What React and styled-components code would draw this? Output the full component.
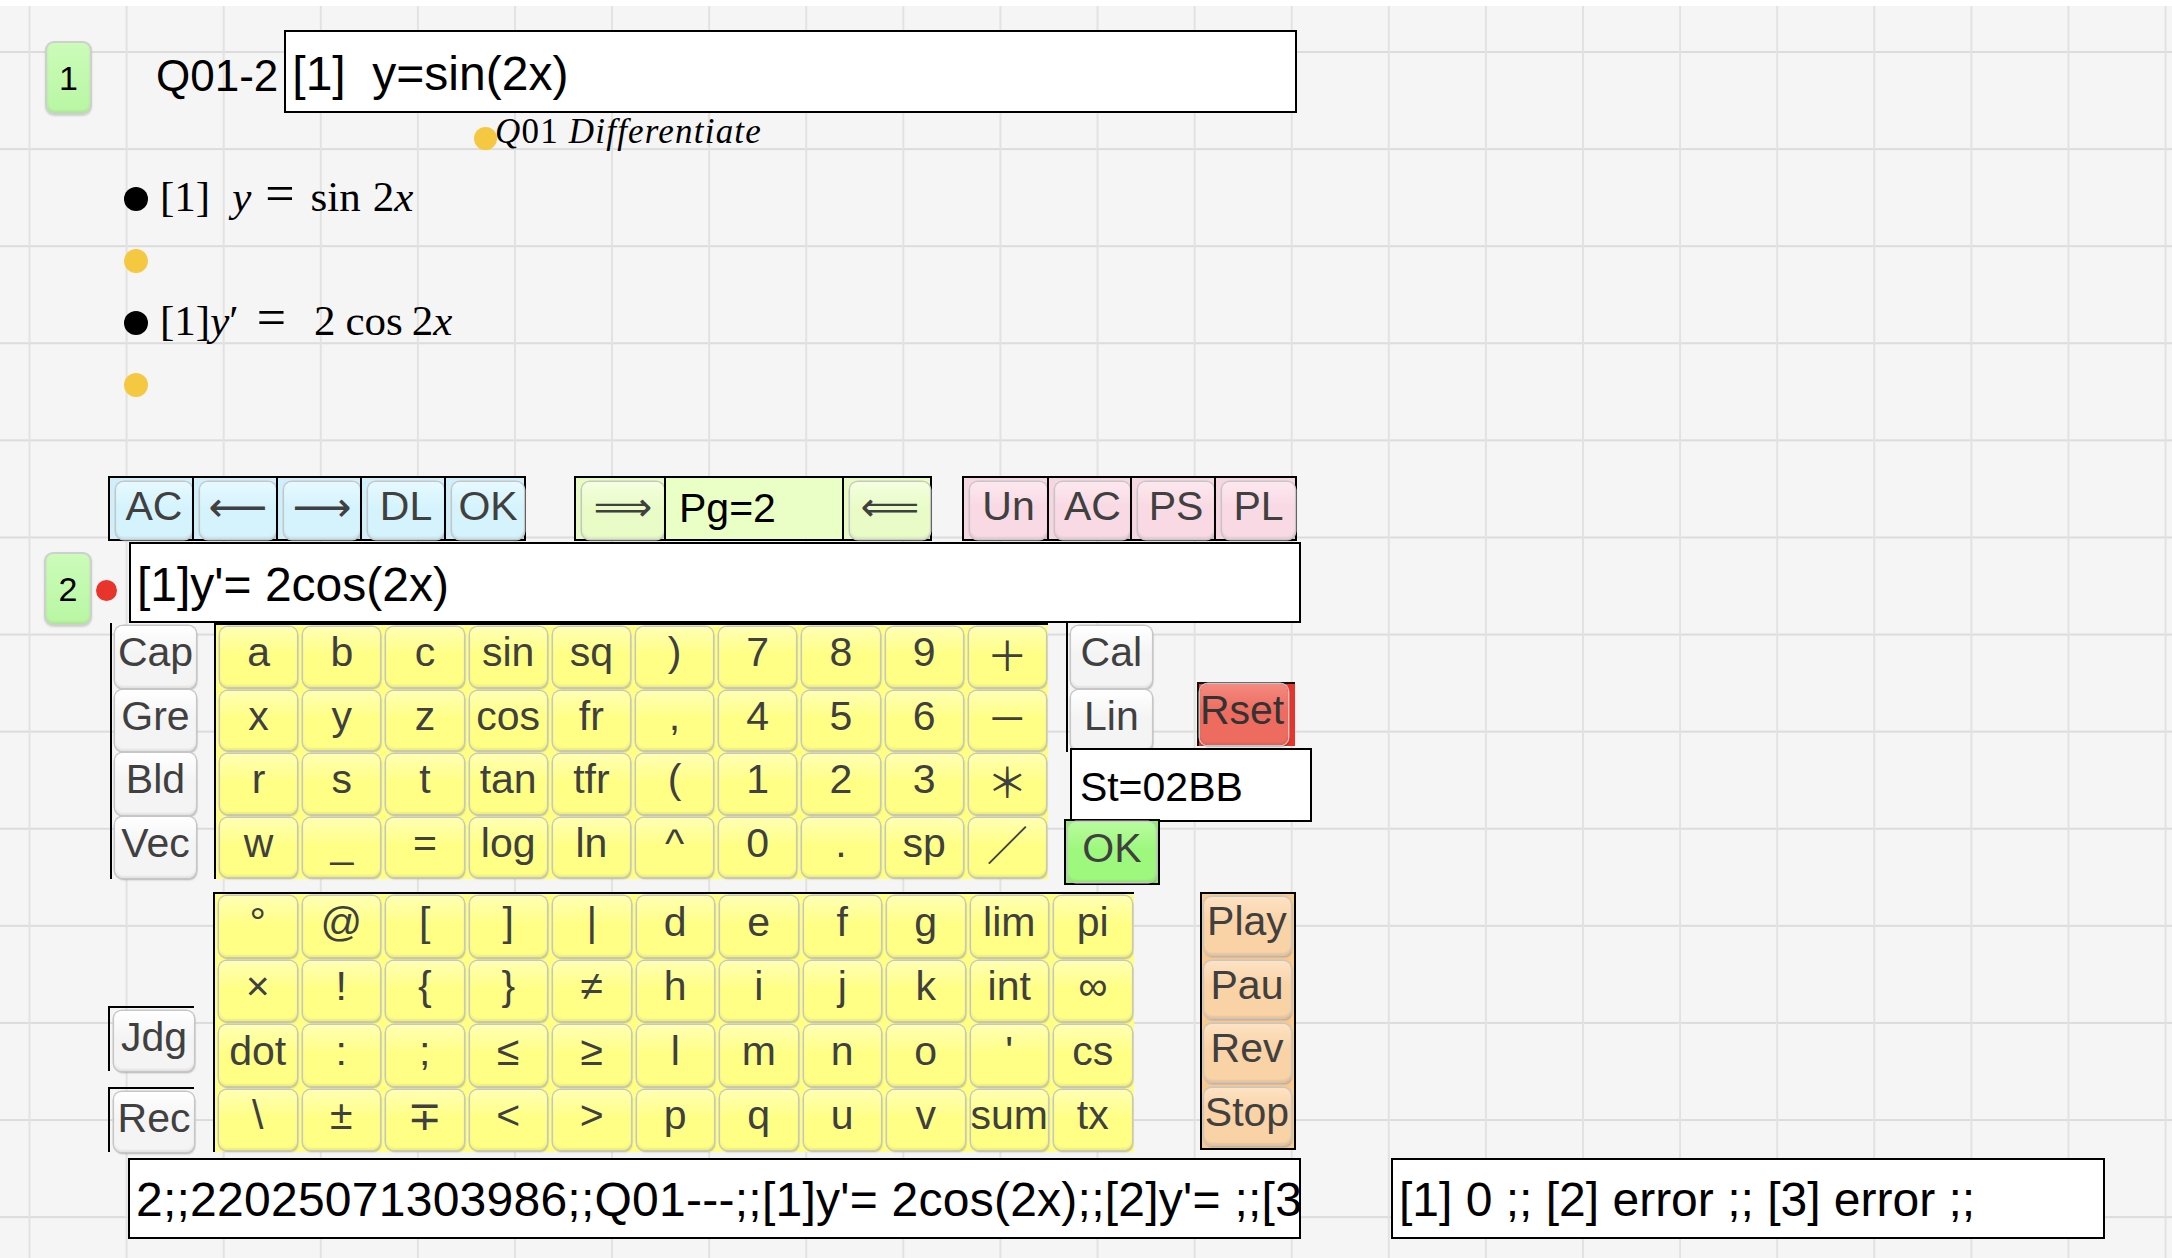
import styled, { createGlobalStyle } from "styled-components";

const GlobalStyle = createGlobalStyle`
  html, body {
    margin: 0;
    padding: 0;
    background: #ffffff;
  }
  body {
    font-family: "Liberation Sans", "DejaVu Sans", Arial, sans-serif;
  }
`;

const UPPER_KEYS = [
  ["a", "b", "c", "sin", "sq", ")", "7", "8", "9", "＋"],
  ["x", "y", "z", "cos", "fr", ",", "4", "5", "6", "－"],
  ["r", "s", "t", "tan", "tfr", "(", "1", "2", "3", "＊"],
  ["w", "_", "=", "log", "ln", "^", "0", ".", "sp", "／"],
];

const LOWER_KEYS = [
  ["°", "@", "[", "]", "|", "d", "e", "f", "g", "lim", "pi"],
  ["×", "!", "{", "}", "≠", "h", "i", "j", "k", "int", "∞"],
  ["dot", ":", ";", "≤", "≥", "l", "m", "n", "o", "'", "cs"],
  ["\\", "±", "∓", "<", ">", "p", "q", "u", "v", "sum", "tx"],
];

const Page = styled.div`
  margin-top: 6px;
  min-height: 1252px;
  padding-top: 24px;
  box-sizing: border-box;
  background-color: #f5f5f5;
  background-image: linear-gradient(to right, #e2e2e2 0, #e2e2e2 2px, transparent 2px),
    linear-gradient(to bottom, #dcdcdc 0, #dcdcdc 2px, transparent 2px);
  background-size: 97.1px 97.1px;
  background-position: 28.5px 45px;
  display: flex;
  flex-direction: column;
  align-items: flex-start;
`;

/* ---------- question header ---------- */

const HeaderRow = styled.div`
  display: flex;
  align-items: flex-start;
  height: 83px;
  padding-left: 45px;
`;

const Badge = styled.div`
  width: ${(p) => p.$w}px;
  height: 74px;
  margin-top: ${(p) => p.$top}px;
  box-sizing: border-box;
  border: 2px solid #cfcfcf;
  border-radius: 9px;
  background: linear-gradient(to bottom, #cbfcb9, #b9f6a3);
  box-shadow: inset 0 -2px 3px rgba(0, 0, 0, 0.08), 0 1px 2px rgba(0, 0, 0, 0.15);
  display: flex;
  align-items: center;
  justify-content: center;
  font-size: 34px;
  color: #000;
`;

const QLabel = styled.div`
  margin-left: 64px;
  margin-top: 8px;
  font-size: 44px;
  line-height: 75px;
  color: #000;
`;

const TextBox = styled.div`
  width: ${(p) => p.$w}px;
  height: ${(p) => p.$h}px;
  margin-left: ${(p) => p.$ml || 0}px;
  margin-top: ${(p) => p.$mt || 0}px;
  box-sizing: border-box;
  border: 2px solid #000;
  background: #fff;
  padding: ${(p) => p.$pt}px 0 0 ${(p) => p.$pl || 6}px;
  font-size: ${(p) => p.$size || 48}px;
  line-height: ${(p) => p.$lh}px;
  letter-spacing: ${(p) => p.$ls || 0}px;
  color: #000;
  white-space: pre;
  overflow: hidden;
`;

const NoteRow = styled.div`
  display: flex;
  align-items: flex-start;
  height: 48px;
  padding-left: 474px;
`;

const Dot = styled.div`
  flex: 0 0 auto;
  width: ${(p) => p.$size}px;
  height: ${(p) => p.$size}px;
  margin-top: ${(p) => p.$top || 0}px;
  margin-left: ${(p) => p.$ml || 0}px;
  border-radius: 50%;
  background: ${(p) => p.$color};
`;

const NoteText = styled.div`
  margin-top: 1px;
  margin-left: -2px;
  font-family: "Liberation Serif", "DejaVu Serif", serif;
  font-style: italic;
  font-size: 35px;
  line-height: 35px;
  letter-spacing: 1.2px;
  color: #000;
`;

const Upright = styled.span`
  font-style: normal;
`;

/* ---------- rendered maths ---------- */

const MathList = styled.div`
  margin-top: 7px;
  padding-left: 124px;
  display: flex;
  flex-direction: column;
`;

const MathRow = styled.div`
  height: 62px;
  display: flex;
  align-items: center;
`;

const MathLine = styled.div`
  margin-left: 12px;
  padding-bottom: 6px;
  font-family: "Liberation Serif", "DejaVu Serif", serif;
  font-size: 43px;
  line-height: 43px;
  color: #000;
  white-space: pre;
`;

const Var = styled.i`
  font-style: italic;
`;

const Rel = styled.span`
  font-size: 52px;
  line-height: 0;
`;

const Gap = styled.span`
  display: inline-block;
  width: ${(p) => p.$w}px;
`;

/* ---------- toolbars ---------- */

const ToolbarRow = styled.div`
  margin-top: 60px;
  padding-left: 108px;
  display: flex;
  align-items: flex-start;
`;

const Toolbar = styled.div`
  display: flex;
  height: 65px;
  margin-left: ${(p) => p.$ml || 0}px;
  box-sizing: border-box;
  border: 2px solid #000;
  background: ${(p) => p.$bg};
`;

const ToolCell = styled.div`
  flex: 0 0 auto;
  width: ${(p) => p.$w}px;
  box-sizing: border-box;
  border-left: ${(p) => (p.$first ? "none" : "2px solid #000")};
  padding: 4px 0 0 6px;
  background: ${(p) => p.$bg || "transparent"};
  display: flex;
`;

const PageLabel = styled.div`
  padding: 0 0 0 7px;
  font-size: 41px;
  line-height: 52px;
  color: #000;
`;

const Btn = styled.div`
  flex: 1 1 auto;
  width: 100%;
  height: 100%;
  box-sizing: border-box;
  padding-bottom: 8px;
  border-radius: 8px;
  background: linear-gradient(to bottom, ${(p) => p.$light || p.$face} 0%, ${(p) => p.$face} 45%);
  box-shadow: 0 0 0 1.5px #c6c6c6, inset 0 -2px 2px rgba(0, 0, 0, 0.07),
    1px 2px 2px rgba(0, 0, 0, 0.28);
  display: flex;
  align-items: center;
  justify-content: ${(p) => p.$justify || "center"};
  overflow: hidden;
  white-space: nowrap;
  font-family: "Liberation Sans", "DejaVu Sans", "Noto Sans CJK JP", sans-serif;
  font-size: ${(p) => p.$size || 41}px;
  color: ${(p) => p.$ink || "#404040"};
`;

/* ---------- answer input ---------- */

const InputRow = styled.div`
  margin-top: 1px;
  height: 81px;
  padding-left: 44px;
  display: flex;
  align-items: flex-start;
`;

/* ---------- keyboards ---------- */

const KbRow = styled.div`
  height: ${(p) => p.$h}px;
  margin-top: ${(p) => p.$mt || 0}px;
  padding-left: ${(p) => p.$pl}px;
  display: flex;
  align-items: flex-start;
`;

const SideCol = styled.div`
  width: 86px;
  box-sizing: border-box;
  border-left: 2px solid #000;
  padding-top: 2px;
  display: grid;
  grid-auto-rows: 63.5px;
`;

const SideCell = styled.div`
  padding: 1px 0 1px 3px;
  display: flex;
`;

const KeyGrid = styled.div`
  margin-left: ${(p) => p.$ml}px;
  display: grid;
  grid-template-columns: repeat(${(p) => p.$cols}, ${(p) => p.$cw}px);
  grid-auto-rows: ${(p) => p.$rh}px;
  border-top: 2px solid #000;
  border-left: 2px solid #000;
  background: #ffff86;
`;

const KeyCell = styled.div`
  padding: 2px 2px 2px 4px;
  display: flex;
`;

const RightPanel = styled.div`
  margin-left: 18px;
  display: flex;
  flex-direction: column;
  align-items: flex-start;
`;

const PanelTop = styled.div`
  display: flex;
  align-items: flex-start;
`;

const ColorBox = styled.div`
  width: ${(p) => p.$w}px;
  height: ${(p) => p.$h}px;
  margin: ${(p) => p.$m};
  box-sizing: border-box;
  background: ${(p) => p.$bg};
  border: ${(p) => p.$border};
  border-width: ${(p) => p.$bw || "2px"};
  padding: ${(p) => p.$pad};
  display: flex;
`;

const StackCol = styled.div`
  width: 86px;
  height: 100%;
  display: flex;
  flex-direction: column;
  justify-content: flex-end;
  gap: 16px;
`;

const FrameCell = styled.div`
  height: 65px;
  box-sizing: border-box;
  border-left: 2px solid #000;
  border-top: 2px solid #000;
  padding: 3px 0 0 4px;
  display: flex;
`;

const PlayCol = styled.div`
  width: 96px;
  height: 258px;
  margin-left: 66px;
  box-sizing: border-box;
  border: 2px solid #000;
  background: #f7c993;
  display: grid;
  grid-auto-rows: 1fr;
`;

const PlayCell = styled.div`
  padding: 3px 3px 3px 2px;
  display: flex;
`;

const OutputRow = styled.div`
  margin-top: 6px;
  padding-left: 128px;
  display: flex;
`;

const KEY_FACE = { $face: "#ffff86", $light: "#ffffb4" };
const WHITE_FACE = { $face: "#f4f4f4", $light: "#ffffff" };

const KeyBoard = ({ rows, cw, rh, ml }) => (
  <KeyGrid $cols={rows[0].length} $cw={cw} $rh={rh} $ml={ml}>
    {rows.flat().map((k, i) => (
      <KeyCell key={i}>
        <Btn {...KEY_FACE}>{k}</Btn>
      </KeyCell>
    ))}
  </KeyGrid>
);

export default function App() {
  return (
    <>
      <GlobalStyle />
      <Page>
        <HeaderRow>
          <Badge $w={47} $top={11}>1</Badge>
          <QLabel>Q01-2</QLabel>
          <TextBox $w={1013} $h={83} $ml={6} $pt={5} $lh={74}>
            {"[1]  y=sin(2x)"}
          </TextBox>
        </HeaderRow>

        <NoteRow>
          <Dot $size={23} $top={14} $color="#f5c842" />
          <NoteText>
            Q<Upright>01</Upright> Differentiate
          </NoteText>
        </NoteRow>

        <MathList>
          <MathRow>
            <Dot $size={24} $color="#000" />
            <MathLine>
              [1]
              <Gap $w={22} />
              <Var>y</Var>
              <Gap $w={14} />
              <Rel>=</Rel>
              <Gap $w={16} />
              sin
              <Gap $w={12} />2<Var>x</Var>
            </MathLine>
          </MathRow>
          <MathRow>
            <Dot $size={24} $color="#f5c842" />
          </MathRow>
          <MathRow>
            <Dot $size={24} $color="#000" />
            <MathLine>
              [1]
              <Var>y</Var>′<Gap $w={18} />
              <Rel>=</Rel>
              <Gap $w={28} />2<Gap $w={10} />
              cos
              <Gap $w={9} />2<Var>x</Var>
            </MathLine>
          </MathRow>
          <MathRow>
            <Dot $size={24} $color="#f5c842" />
          </MathRow>
        </MathList>

        <ToolbarRow>
          <Toolbar $bg="#d0effa">
            {[
              ["AC", 82],
              ["⟵", 84],
              ["⟶", 84],
              ["DL", 84],
              ["OK", 80],
            ].map(([t, w], i) => (
              <ToolCell key={i} $w={w} $first={i === 0}>
                <Btn $face="#d5f3fd" $light="#e6f9ff">
                  {t}
                </Btn>
              </ToolCell>
            ))}
          </Toolbar>
          <Toolbar $bg="#e7fbc2" $ml={48}>
            <ToolCell $w={88} $first>
              <Btn $face="#e9fcc7" $light="#f4ffdf">
                ⟹
              </Btn>
            </ToolCell>
            <ToolCell $w={178} $bg="#eaffc5">
              <PageLabel>Pg=2</PageLabel>
            </ToolCell>
            <ToolCell $w={88}>
              <Btn $face="#e9fcc7" $light="#f4ffdf">
                ⟸
              </Btn>
            </ToolCell>
          </Toolbar>
          <Toolbar $bg="#f6d6e0" $ml={30}>
            {[
              ["Un", 83],
              ["AC", 83],
              ["PS", 84],
              ["PL", 81],
            ].map(([t, w], i) => (
              <ToolCell key={i} $w={w} $first={i === 0}>
                <Btn $face="#f9d9e3" $light="#fde8ef">
                  {t}
                </Btn>
              </ToolCell>
            ))}
          </Toolbar>
        </ToolbarRow>

        <InputRow>
          <Badge $w={48} $top={10}>2</Badge>
          <Dot $size={21} $top={38} $ml={4} $color="#e8342a" />
          <TextBox $w={1172} $h={81} $ml={12} $pt={5} $lh={72}>
            {"[1]y'= 2cos(2x)"}
          </TextBox>
        </InputRow>

        <KbRow $h={256} $pl={110}>
          <SideCol>
            {["Cap", "Gre", "Bld", "Vec"].map((t) => (
              <SideCell key={t}>
                <Btn {...WHITE_FACE}>{t}</Btn>
              </SideCell>
            ))}
          </SideCol>
          <KeyBoard rows={UPPER_KEYS} cw={83.2} rh={63.5} ml={18} />
          <RightPanel>
            <PanelTop>
              <SideCol>
                {["Cal", "Lin"].map((t) => (
                  <SideCell key={t}>
                    <Btn {...WHITE_FACE}>{t}</Btn>
                  </SideCell>
                ))}
              </SideCol>
              <ColorBox
                $w={98}
                $h={64}
                $m="59px 0 0 45px"
                $bg="#e8342a"
                $border="solid #111"
                $bw="2px 0 0 2px"
                $pad="0 7px 1px 1px"
              >
                <Btn $face="#ee6b5f" $light="#f48a80" $justify="flex-start" $ink="#333">
                  Rset
                </Btn>
              </ColorBox>
            </PanelTop>
            <TextBox $w={242} $h={74} $ml={4} $mt={-4} $pt={4} $lh={66} $pl={8} $size={41}>
              St=02BB
            </TextBox>
            <ColorBox
              $w={96}
              $h={66}
              $m="-3px 0 0 -2px"
              $bg="#8cf067"
              $border="solid #000"
              $pad="1px 2px 1px 2px"
            >
              <Btn $face="#9ff87e" $light="#b9fb9f">
                OK
              </Btn>
            </ColorBox>
          </RightPanel>
        </KbRow>

        <KbRow $h={260} $mt={13} $pl={108}>
          <StackCol>
            {["Jdg", "Rec"].map((t) => (
              <FrameCell key={t}>
                <Btn {...WHITE_FACE}>{t}</Btn>
              </FrameCell>
            ))}
          </StackCol>
          <KeyBoard rows={LOWER_KEYS} cw={83.5} rh={64.5} ml={19} />
          <PlayCol>
            {["Play", "Pau", "Rev", "Stop"].map((t) => (
              <PlayCell key={t}>
                <Btn $face="#f9d2a6" $light="#fde2c3">
                  {t}
                </Btn>
              </PlayCell>
            ))}
          </PlayCol>
        </KbRow>

        <OutputRow>
          <TextBox $w={1173} $h={81} $pt={3} $lh={74} $ls={0.25}>
            {"2;;22025071303986;;Q01---;;[1]y'= 2cos(2x);;[2]y'= ;;[3];;"}
          </TextBox>
          <TextBox $w={714} $h={81} $ml={90} $pt={3} $lh={74}>
            {"[1] 0 ;; [2] error ;; [3] error ;;"}
          </TextBox>
        </OutputRow>
      </Page>
    </>
  );
}
